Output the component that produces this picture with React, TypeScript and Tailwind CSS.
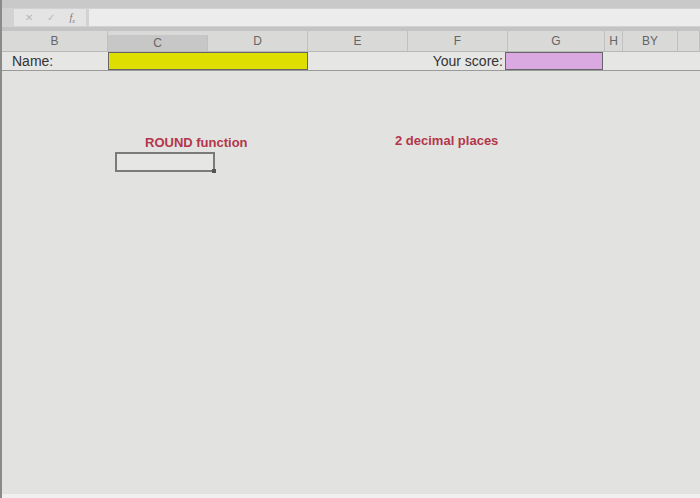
const cols = [
  { label: "B", w: 106 },
  { label: "C", w: 100, selected: true },
  { label: "D", w: 100 },
  { label: "E", w: 100 },
  { label: "F", w: 100 },
  { label: "G", w: 97 },
  { label: "H", w: 18 },
  { label: "BY", w: 55 },
  { label: "", w: 22 },
];

export default function App() {
  return (
    <div
      className="w-[700px] h-[498px] overflow-hidden bg-[#e2e2e0] flex flex-col border-l-2 border-[#8a8a8a]"
      style={{ fontFamily: '"Liberation Sans", Arial, sans-serif' }}
    >
      {/* top strip */}
      <div className="h-[8px] bg-[#c9c9c9]" />

      {/* formula bar */}
      <div className="h-[19px] bg-[#d2d2d2] flex items-stretch gap-[3px] pl-[12px]">
        <div className="w-[72px] bg-[#e4e4e4] flex items-center justify-around px-1 text-[#b8b8b8] text-[10px] my-[1px]">
          <span>✕</span>
          <span>✓</span>
          <span className="italic text-[#777] text-[10px]" style={{ fontFamily: '"Liberation Serif", serif' }}>
            f<sub className="text-[6px]">x</sub>
          </span>
        </div>
        <div className="flex-1 bg-[#ececec] my-[1px]" />
      </div>

      <div className="h-[4px] bg-[#c4c4c4]" />

      {/* column headers */}
      <div className="h-[21px] bg-[#d9d9d8] flex border-b border-[#b8b8b8]">
        {cols.map((c, i) => (
          <div
            key={i}
            className={`shrink-0 flex items-center justify-center text-[12px] text-[#666] border-r border-[#c0c0c0] ${
              c.selected ? "bg-[#c7c7c7] mt-[4px]" : ""
            }`}
            style={{ width: c.w }}
          >
            {c.label}
          </div>
        ))}
      </div>

      {/* row 2 */}
      <div className="h-[19px] bg-[#e6e6e5] flex items-stretch border-b border-[#9a9a9a]">
        <div className="w-[106px] shrink-0 flex items-center pl-[10px] text-[14px] text-[#333]">Name:</div>
        <div className="w-[200px] shrink-0 bg-[#dede00] border border-[#666]" />
        <div className="w-[100px] shrink-0" />
        <div className="w-[97px] shrink-0 flex items-center justify-end pr-[2px] text-[14px] text-[#333]">
          Your score:
        </div>
        <div className="w-[98px] shrink-0 bg-[#dba9e2] border border-[#666]" />
        <div className="flex-1" />
      </div>

      {/* sheet body */}
      <div className="flex-1 flex">
        <div className="w-[113px] shrink-0" />
        <div className="w-[248px] shrink-0 flex flex-col pt-[64px]">
          <div className="pl-[30px] text-[13px] font-bold text-[#b3364a] leading-[16px]">ROUND function</div>
          <div className="relative mt-[1px] w-[100px] h-[20px] border-2 border-[#7a7a7a] bg-[#e6e6e5]">
            <div className="absolute -right-[3px] -bottom-[3px] w-[4px] h-[4px] bg-[#555]" />
          </div>
        </div>
        <div className="pt-[62px] pl-[32px] text-[13px] font-bold text-[#b3364a] leading-[16px]">2 decimal places</div>
      </div>
      <div className="h-[4px] bg-[#f0f0f0]" />
    </div>
  );
}
